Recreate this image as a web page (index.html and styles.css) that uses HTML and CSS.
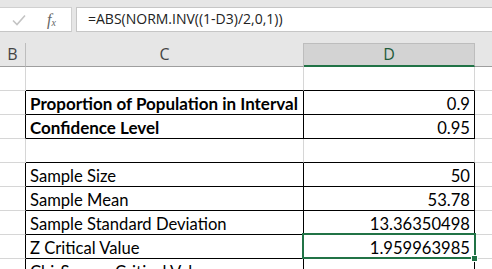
FILE: index.html
```html
<!DOCTYPE html>
<html lang="en">
<head>
    <meta charset="UTF-8">
    <meta name="viewport" content="width=device-width, initial-scale=1.0">
    <title>Sheet</title>
    <link rel="stylesheet" href="styles.css">
</head>
<body>
    <div class="formula-area">
        <div class="name-tools">
            <svg class="check" width="14" height="12" viewBox="0 0 14 12">
                <path d="M1 6.5 L5 10.5 L13 1.5" fill="none" stroke="#c4c4c4" stroke-width="1.6"/>
            </svg>
            <span class="fx">f<sub>x</sub></span>
        </div>
        <div class="formula-box">=ABS(NORM.INV((1-D3)/2,0,1))</div>
    </div>

    <div class="sheet">
        <div class="hd">B</div>
        <div class="hd">C</div>
        <div class="hd active">D</div>
        <div class="hd last"></div>

        <!-- row 1 -->
        <div class="c"></div>
        <div class="c blk-b"></div>
        <div class="c blk-b"></div>
        <div class="c e"></div>

        <!-- row 2 -->
        <div class="c blk-r"></div>
        <div class="c blk-r blk-b bold">Proportion of Population in Interval</div>
        <div class="c blk-r blk-b num">0.9</div>
        <div class="c e"></div>

        <!-- row 3 -->
        <div class="c blk-r"></div>
        <div class="c blk-r blk-b bold">Confidence Level</div>
        <div class="c blk-r blk-b num">0.95</div>
        <div class="c e"></div>

        <!-- row 4 -->
        <div class="c"></div>
        <div class="c blk-b"></div>
        <div class="c blk-b"></div>
        <div class="c e"></div>

        <!-- rows 5 to 9 -->
        <div class="c blk-r"></div>
        <div class="c blk-r blk-b">Sample Size</div>
        <div class="c blk-r blk-b num">50</div>
        <div class="c e"></div>

        <div class="c blk-r"></div>
        <div class="c blk-r blk-b">Sample Mean</div>
        <div class="c blk-r blk-b num">53.78</div>
        <div class="c e"></div>

        <div class="c blk-r"></div>
        <div class="c blk-r blk-b">Sample Standard Deviation</div>
        <div class="c blk-r blk-b num">13.36350498</div>
        <div class="c e"></div>

        <div class="c blk-r"></div>
        <div class="c blk-r blk-b">Z Critical Value</div>
        <div class="c blk-r blk-b num selected">1.959963985<span class="handle"></span></div>
        <div class="c e"></div>

        <div class="c blk-r"></div>
        <div class="c blk-r blk-b">Chi-Square Critical Value</div>
        <div class="c blk-r blk-b num"></div>
        <div class="c e"></div>
    </div>
</body>
</html>
```

FILE: styles.css
```css
* {
    box-sizing: border-box;
}

body {
    margin: 0;
    width: 492px;
    height: 269px;
    overflow: hidden;
    background-color: #fff;
    font-family: Lato, "Liberation Sans", sans-serif;
}

.formula-area {
    display: flex;
    gap: 4px;
    background-color: #e6e6e6;
    padding-top: 7px;
    padding-bottom: 11px;
    height: 43px;
}

.name-tools {
    width: 72px;
    height: 25px;
    background-color: #fff;
    border-top: 1px solid #d0d0d0;
    border-bottom: 1px solid #c6c6c6;
    border-right: 1px solid #d0d0d0;
    display: flex;
    align-items: center;
    padding-left: 12px;
}

.check {
    margin-top: 1px;
}

.fx {
    margin-left: 21px;
    font-family: "Liberation Serif", serif;
    font-style: italic;
    font-size: 16px;
    color: #666;
}

.fx sub {
    font-size: 10px;
    vertical-align: -1px;
}

.formula-box {
    flex: 1;
    height: 25px;
    background-color: #fff;
    border: 1px solid #c6c6c6;
    border-right: none;
    padding-left: 11px;
    font-family: "Open Sans", sans-serif;
    font-size: 14px;
    line-height: 22px;
    color: #222;
}

.sheet {
    display: grid;
    grid-template-columns: 26px 278px 171px 1fr;
    grid-auto-rows: 24px;
}

.hd {
    background-color: #e6e6e6;
    border-right: 1px solid #bdbdbd;
    border-bottom: 1px solid #9e9e9e;
    font-family: "Open Sans", sans-serif;
    font-size: 16px;
    line-height: 23px;
    text-align: center;
    color: #444;
}

.hd.active {
    background-color: #d3d3d3;
    border-top: 1px solid #bdbdbd;
    border-bottom: 2px solid #217346;
    line-height: 21px;
    color: #1e5b3a;
}

.hd.last {
    border-right: none;
}

.c {
    border-right: 1px solid #d6d6d6;
    border-bottom: 1px solid #d6d6d6;
    font-size: 16.6px;
    line-height: 20px;
    padding: 3px 4px 0 4px;
    white-space: nowrap;
    overflow: hidden;
    color: #000;
}

.c.e {
    border-right: none;
}

.blk-r {
    border-right-color: #000;
}

.blk-b {
    border-bottom-color: #000;
}

.bold {
    font-weight: bold;
    font-size: 17px;
}

.num {
    text-align: right;
}

.selected {
    position: relative;
    overflow: visible;
}

.selected::before {
    content: "";
    position: absolute;
    left: -2px;
    top: -2px;
    right: -2px;
    bottom: -1px;
    border: 2px solid #217346;
}

.handle {
    position: absolute;
    right: -4px;
    bottom: -4px;
    width: 7px;
    height: 7px;
    background-color: #217346;
    border: 1px solid #fff;
}
```
